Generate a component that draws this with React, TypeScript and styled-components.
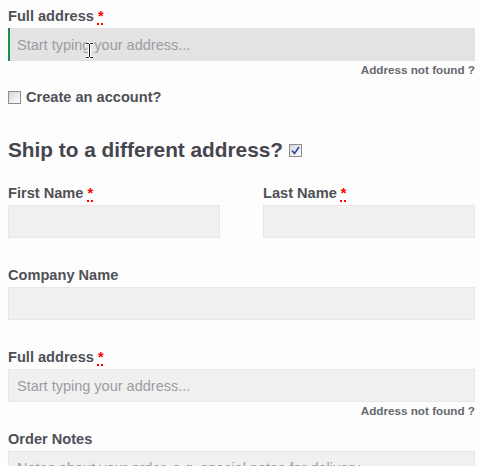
import React from 'react';
import styled, { createGlobalStyle } from 'styled-components';

const Global = createGlobalStyle`
  html, body { margin: 0; padding: 0; background: #fdfdfd; }
  body { font-family: "Liberation Sans", Arial, sans-serif; color: #505057; }
  * { box-sizing: border-box; }
`;

const Form = styled.form`
  width: 482px;
  padding: 6px 7px 0 8px;
  display: flex;
  flex-direction: column;
  height: 466px;
  overflow: hidden;
`;

const Field = styled.div<{ $mt?: number }>`
  display: flex;
  flex-direction: column;
  position: relative;
  margin-top: ${(p) => p.$mt ?? 0}px;
`;

const Label = styled.label`
  font-weight: bold;
  font-size: 14.6px;
  line-height: 20px;
  height: 20px;
  margin-bottom: 2px;
  color: #505057;
  white-space: nowrap;
`;

const Req = styled.abbr`
  color: #f00;
  font-weight: bold;
  margin-left: 4px;
  text-decoration: underline dotted #f00;
  text-decoration-thickness: 2px;
  text-underline-offset: 2px;
  cursor: help;
`;

const Input = styled.input<{ $focused?: boolean }>`
  width: 100%;
  height: 33px;
  margin: 0;
  font-family: "Liberation Sans", Arial, sans-serif;
  font-size: 14.5px;
  color: #505057;
  outline: none;
  background: ${(p) => (p.$focused ? '#e3e3e3' : '#f0f0f0')};
  border: ${(p) => (p.$focused ? '0' : '1px solid #e7e7e7')};
  border-left: ${(p) => (p.$focused ? '2px solid #1f8a4c' : '1px solid #e7e7e7')};
  padding: 0 8px 0 ${(p) => (p.$focused ? 7 : 8)}px;
  &::placeholder { color: #9c9ca2; }
`;

const TextArea = styled.textarea`
  width: 100%;
  height: 80px;
  margin: 0;
  resize: none;
  font-family: "Liberation Sans", Arial, sans-serif;
  font-size: 14.5px;
  line-height: 20px;
  background: #f0f0f0;
  border: 1px solid #e7e7e7;
  padding: 6px 8px;
  outline: none;
  &::placeholder { color: #9c9ca2; }
`;

const NotFound = styled.a`
  display: block;
  margin-top: 2px;
  text-align: right;
  font-weight: bold;
  font-size: 11.7px;
  line-height: 14px;
  color: #68686e;
  text-decoration: none;
`;

const CheckRow = styled.label`
  display: flex;
  align-items: center;
  gap: 5px;
  height: 20px;
  margin-top: 12px;
  font-weight: bold;
  font-size: 14.6px;
  color: #505057;
`;

const Heading = styled.h3`
  display: flex;
  align-items: center;
  gap: 6px;
  margin: 31px 0 0;
  height: 28px;
  font-size: 20.8px;
  line-height: 28px;
  font-weight: bold;
  color: #45454d;
  white-space: nowrap;
`;

const Box = styled.span`
  display: inline-flex;
  align-items: center;
  justify-content: center;
  width: 13px;
  height: 13px;
  flex: none;
  border: 1px solid #8d8d93;
  background: linear-gradient(135deg, #d6d6da 0%, #eeeeee 60%, #fbfbfb 100%);
`;

const Cols = styled.div`
  display: grid;
  grid-template-columns: 212px 212px;
  column-gap: 43px;
  margin-top: 19px;
`;

const Cursor = styled.svg`
  position: absolute;
  left: 77px;
  top: 36px;
  pointer-events: none;
`;

const Checkbox: React.FC<{ checked?: boolean }> = ({ checked }) => (
  <Box>
    {checked && (
      <svg width="9" height="9" viewBox="0 0 9 9">
        <path d="M1 4.5 L3.5 7.5 L8 1" fill="none" stroke="#2b47a3" strokeWidth="1.6" />
      </svg>
    )}
  </Box>
);

export default function App() {
  return (
    <>
      <Global />
      <Form onSubmit={(e) => e.preventDefault()}>
        <Field>
          <Label>
            Full address<Req title="required">*</Req>
          </Label>
          <Input $focused placeholder="Start typing your address..." />
          <Cursor width="9" height="17" viewBox="0 0 9 17">
            <path d="M1 1.5 H3.5 L4.5 2.5 L5.5 1.5 H8 M4.5 2.5 V14.5 M1 15.5 H3.5 L4.5 14.5 L5.5 15.5 H8 M2.5 8.5 H6.5"
              fill="none" stroke="#fff" strokeWidth="3" />
            <path d="M1 1.5 H3.5 L4.5 2.5 L5.5 1.5 H8 M4.5 2.5 V14.5 M1 15.5 H3.5 L4.5 14.5 L5.5 15.5 H8"
              fill="none" stroke="#111" strokeWidth="1" />
          </Cursor>
        </Field>
        <NotFound href="#">Address not found ?</NotFound>
        <CheckRow>
          <Checkbox />
          Create an account?
        </CheckRow>
        <Heading>
          Ship to a different address?
          <Checkbox checked />
        </Heading>
        <Cols>
          <Field>
            <Label>
              First Name<Req title="required">*</Req>
            </Label>
            <Input />
          </Field>
          <Field>
            <Label>
              Last Name<Req title="required">*</Req>
            </Label>
            <Input />
          </Field>
        </Cols>
        <Field $mt={27}>
          <Label>Company Name</Label>
          <Input />
        </Field>
        <Field $mt={27}>
          <Label>
            Full address<Req title="required">*</Req>
          </Label>
          <Input placeholder="Start typing your address..." />
        </Field>
        <NotFound href="#">Address not found ?</NotFound>
        <Field $mt={11}>
          <Label>Order Notes</Label>
          <TextArea placeholder="Notes about your order, e.g. special notes for delivery." />
        </Field>
      </Form>
    </>
  );
}
